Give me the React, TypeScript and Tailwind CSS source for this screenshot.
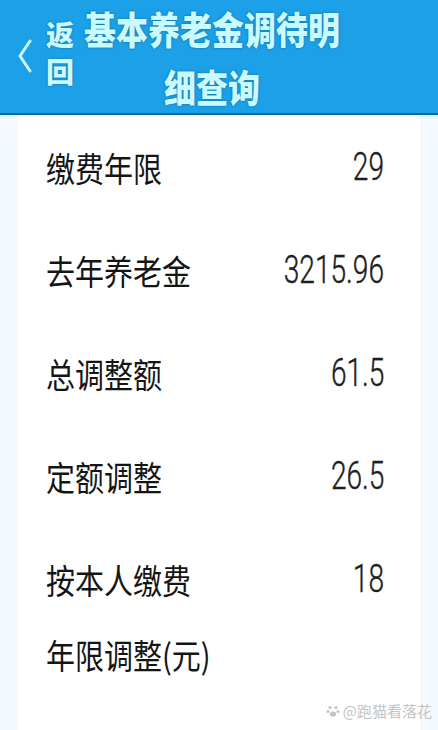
type rowType = {
  label: string[]
  value: string
}

const rows: rowType[] = [
  { label: ["缴费年限"], value: "29" },
  { label: ["去年养老金"], value: "3215.96" },
  { label: ["总调整额"], value: "61.5" },
  { label: ["定额调整"], value: "26.5" },
  { label: ["按本人缴费", "年限调整(元)"], value: "18" },
]

const cjk = "font-['Noto_Sans_CJK_SC','Noto_Sans',sans-serif]"

const Row = ({ row }: { row: rowType }) => {
  return (
    <div className="flex justify-between items-start pl-[46px] pr-[54px] pt-[37px] pb-[36px]">
      <div className={`${cjk} text-[29px] text-[#151515] flex flex-col gap-[45px]`}>
        {row.label.map((l) => (
          <span key={l} className="leading-[30px] inline-block origin-left scale-y-[1.18]">{l}</span>
        ))}
      </div>
      <span className="font-['Roboto','Liberation_Sans',sans-serif] font-light text-[37px] leading-[30px] text-[#1e1e1e] inline-block origin-right scale-x-[0.76] scale-y-[1.05] [-webkit-text-stroke:0.4px_#1e1e1e]">
        {row.value}
      </span>
    </div>
  )
}

export default function App() {
  return (
    <div className="w-[438px] h-[730px] overflow-hidden relative bg-[#f4f9fe]">
      <div className="h-[115px] bg-[#1ca0e8] flex items-start text-[#c9faff] [text-shadow:0_0_2px_#0b5f94] border-b-2 border-[#0c6a9f]">
        <div className="flex items-start pl-[17px] pt-[16px]">
          <svg width="16" height="34" viewBox="0 0 16 34" className="mt-[23px]">
            <polyline points="13,2 3,17 13,32" fill="none" stroke="#c9faff" strokeWidth="3" strokeLinecap="round" strokeLinejoin="round" />
          </svg>
          <div className={`${cjk} text-[28px] font-black flex flex-col ml-[13px]`}>
            <span className="leading-[37px]">返</span>
            <span className="leading-[37px]">回</span>
          </div>
        </div>
        <div className={`${cjk} text-[32px] font-black flex flex-col items-center ml-[10px] -mt-[2px]`}>
          <span className="leading-[58px] inline-block scale-y-[1.18]">基本养老金调待明</span>
          <span className="leading-[58px] inline-block scale-y-[1.18]">细查询</span>
        </div>
      </div>
      <div className="h-[2px] bg-[#dcf5fb]"></div>
      <div className="mx-[18px] bg-white h-full -mt-[2px]">
        <div className="-mx-[18px]">
          {rows.map((r) => (
            <Row key={r.value} row={r} />
          ))}
        </div>
      </div>
      <div className={`${cjk} absolute right-[6px] bottom-[8px] flex items-center gap-[3px] text-[15px] text-[#c4c4c4]`}>
        <svg width="14" height="14" viewBox="0 0 14 14">
          <circle cx="4" cy="3.5" r="1.6" fill="#c4c4c4" />
          <circle cx="10" cy="3.5" r="1.6" fill="#c4c4c4" />
          <circle cx="2" cy="7.5" r="1.5" fill="#c4c4c4" />
          <circle cx="12" cy="7.5" r="1.5" fill="#c4c4c4" />
          <ellipse cx="7" cy="10" rx="3.2" ry="2.6" fill="#c4c4c4" />
        </svg>
        <span>@跑猫看落花</span>
      </div>
    </div>
  )
}
